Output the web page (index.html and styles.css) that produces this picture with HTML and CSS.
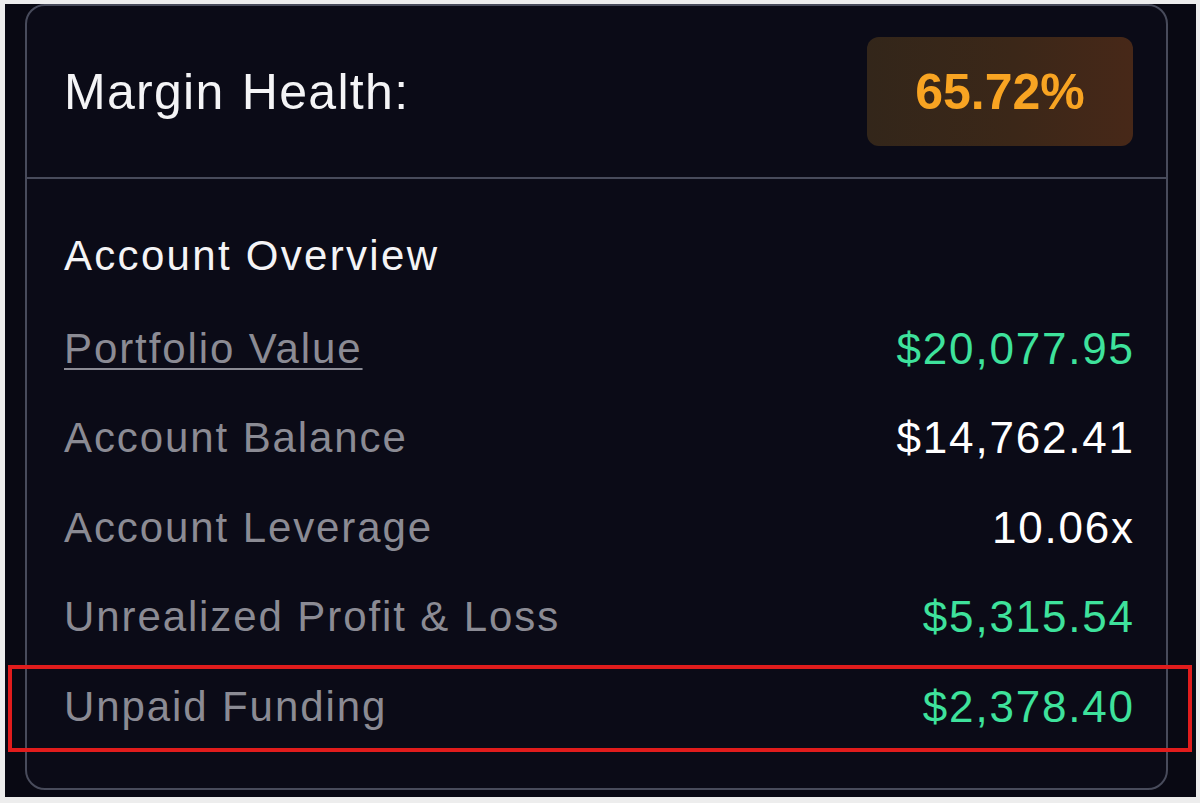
FILE: index.html
```html
<!DOCTYPE html>
<html lang="en">
<head>
<meta charset="utf-8">
<title>Margin Health</title>
<link rel="stylesheet" href="styles.css">
</head>
<body>
<div class="screen">
  <div class="card">
    <div class="card-head">
      <div class="headline">Margin Health:</div>
      <div class="badge">65.72%</div>
    </div>
    <div class="card-body">
      <div class="section-title">Account Overview</div>
      <div class="row">
        <span class="label link">Portfolio Value</span>
        <span class="value green">$20,077.95</span>
      </div>
      <div class="row">
        <span class="label">Account Balance</span>
        <span class="value">$14,762.41</span>
      </div>
      <div class="row">
        <span class="label">Account Leverage</span>
        <span class="value">10.06x</span>
      </div>
      <div class="row">
        <span class="label">Unrealized Profit &amp; Loss</span>
        <span class="value green">$5,315.54</span>
      </div>
      <div class="row">
        <span class="label">Unpaid Funding</span>
        <span class="value green">$2,378.40</span>
      </div>
    </div>
  </div>
  <div class="highlight"></div>
</div>
</body>
</html>
```

FILE: styles.css
```css
html, body {
  margin: 0;
  padding: 0;
  background: #ededed;
}

body {
  font-family: "Liberation Sans", Arial, sans-serif;
}

.screen {
  position: relative;
  box-sizing: border-box;
  margin: 4px 4px 6px 5px;
  height: 793px;
  background: #090913;
  padding: 0 28px 7px 20px;
}

.card {
  box-sizing: border-box;
  height: 100%;
  border: 2px solid #484b5b;
  border-radius: 20px;
  background: #0b0b17;
  display: flex;
  flex-direction: column;
}

.card-head {
  box-sizing: border-box;
  height: 173px;
  border-bottom: 2px solid #484b5b;
  padding: 0 33px 0 37px;
  display: flex;
  align-items: center;
  justify-content: space-between;
}

.headline {
  color: #f4f4f6;
  font-size: 50px;
  letter-spacing: 1.3px;
  word-spacing: 2px;
}

.badge {
  width: 266px;
  height: 109px;
  border-radius: 12px;
  background: linear-gradient(90deg, #33261a 0%, #3b2718 55%, #472818 100%);
  color: #f8a422;
  font-weight: bold;
  font-size: 50px;
  display: flex;
  align-items: center;
  justify-content: center;
}

.card-body {
  padding: 32px 33px 0 37px;
  display: flex;
  flex-direction: column;
}

.section-title {
  height: 93px;
  line-height: 90px;
  color: #f4f4f6;
  font-size: 42px;
  letter-spacing: 2.3px;
}

.row {
  height: 89.5px;
  display: flex;
  align-items: center;
  justify-content: space-between;
  font-size: 42px;
}

.label {
  color: #8b8b94;
  letter-spacing: 1.9px;
}

.label.link {
  text-decoration: underline;
  text-decoration-thickness: 2px;
  text-underline-offset: 5px;
}

.value {
  color: #ffffff;
  font-size: 44px;
  letter-spacing: 1.8px;
  margin-right: -1.8px;
}

.value.green {
  color: #3ee29c;
}

.highlight {
  position: absolute;
  left: 3px;
  top: 661px;
  width: 1184px;
  height: 87px;
  box-sizing: border-box;
  border: 4px solid #e11c1c;
}
```
